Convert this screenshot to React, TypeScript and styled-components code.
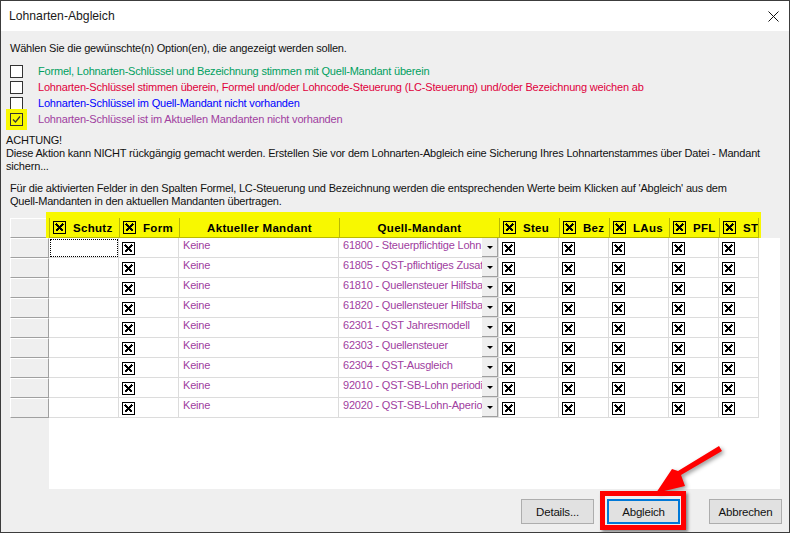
import React from "react";
import styled, { createGlobalStyle } from "styled-components";

const Global = createGlobalStyle`
  html, body { margin: 0; padding: 0; background: #efefef; }
  * { box-sizing: border-box; }
`;

const Dialog = styled.div`
  position: relative;
  width: 790px;
  height: 533px;
  display: flex;
  flex-direction: column;
  background: #efefef;
  border: 1px solid #3c3c3c;
  font-family: "Liberation Sans", Arial, sans-serif;
  font-size: 11px;
  letter-spacing: -0.19px;
  color: #111;
  overflow: hidden;
`;
const TitleBar = styled.div`
  height: 30px;
  flex: none;
  background: #fff;
  display: flex;
  align-items: center;
  justify-content: space-between;
  padding: 0 10px 0 8px;
  font-size: 12.2px;
  letter-spacing: 0;
  color: #1a1a1a;
`;
const CloseIcon = styled.svg`
  width: 11px;
  height: 11px;
  stroke: #111;
  stroke-width: 1;
  fill: none;
`;
const Body = styled.div`
  flex: 1;
  display: flex;
  flex-direction: column;
  min-height: 0;
`;
const Prompt = styled.div`
  height: 14px;
  line-height: 14px;
  margin: 10px 0 0 9px;
`;
const Options = styled.div`
  margin: 8px 0 0 9px;
  display: flex;
  flex-direction: column;
`;
const OptionRow = styled.div`
  height: 16px;
  display: flex;
  align-items: center;
  gap: 15px;
`;
const OptionBox = styled.span<{ $marked?: boolean }>`
  position: relative;
  width: 13px;
  height: 13px;
  flex: none;
  background: ${(p) => (p.$marked ? "#f8f800" : "#fff")};
  border: 1px solid #333;
  box-shadow: ${(p) => (p.$marked ? "0 0 0 4px #f8f800" : "none")};
  svg { position: absolute; left: 1px; top: 1px; }
`;
const OptionLabel = styled.span<{ $color: string }>`
  color: ${(p) => p.$color};
  line-height: 14px;
`;
const Warning = styled.div`
  margin: 7px 0 0 5px;
  line-height: 13px;
  width: 770px;
`;
const Hint = styled.div`
  margin: 9px 0 0 9px;
  line-height: 13px;
  width: 735px;
`;
const GridArea = styled.div`
  margin: 10px 0 0 9px;
  display: flex;
  flex-direction: column;
  width: 770px;
  height: 271px;
`;
const HeadRow = styled.div`
  display: flex;
  height: 20px;
  flex: none;
`;
const Corner = styled.div`
  width: 39px;
  flex: none;
  background: #efefef;
  border-top: 1px solid #fff;
  border-left: 1px solid #fff;
  border-bottom: 1px solid #a0a0a0;
`;
const Band = styled.div`
  display: flex;
  background: #f8f800;
  height: 26px;
  margin: -6px 0 0 -3px;
  padding: 6px 2px 0 3px;
  flex: none;
  position: relative;
`;
const HeadCell = styled.div<{ $w: number; $center?: boolean }>`
  width: ${(p) => p.$w}px;
  flex: none;
  display: flex;
  align-items: center;
  justify-content: ${(p) => (p.$center ? "center" : "flex-start")};
  gap: 7px;
  padding-left: ${(p) => (p.$center ? 0 : 3)}px;
  font-weight: 700;
  font-size: 11.5px;
  letter-spacing: 0.3px;
  color: #000;
  border-left: 1px solid #b9b900;
  border-bottom: 1px solid #b9b900;
  white-space: nowrap;
  overflow: hidden;
  &:last-child { border-right: 1px solid #b9b900; }
`;
const GridBody = styled.div`
  flex: 1;
  display: flex;
  min-height: 0;
`;
const RowHeads = styled.div`
  width: 39px;
  flex: none;
  display: flex;
  flex-direction: column;
`;
const RowHead = styled.div`
  height: 20px;
  background: #efefef;
  border-top: 1px solid #fff;
  border-left: 1px solid #fff;
  border-bottom: 1px solid #a0a0a0;
  border-right: 1px solid #a0a0a0;
`;
const Sheet = styled.div`
  flex: 1;
  background: #fff;
  display: flex;
  flex-direction: column;
`;
const Row = styled.div`
  display: flex;
  height: 20px;
  flex: none;
`;
const Cell = styled.div<{ $w: number; $focus?: boolean }>`
  position: relative;
  width: ${(p) => p.$w}px;
  height: 20px;
  flex: none;
  display: flex;
  padding-left: 3px;
  border-right: 1px solid #dcdcdc;
  border-bottom: 1px solid #dcdcdc;
  ${(p) => (p.$focus ? "outline: 1px dotted #000; outline-offset: -2px;" : "")}
`;
const Mark = styled.span<{ $head?: boolean }>`
  width: 13px;
  height: 13px;
  flex: none;
  margin-top: ${(p) => (p.$head ? 0 : 4)}px;
  border: 1px solid #000;
  background: ${(p) => (p.$head ? "transparent" : "#fff")};
  display: flex;
  align-items: center;
  justify-content: center;
`;
const Purple = styled.span`
  color: #a040a0;
  line-height: 14px;
  white-space: nowrap;
  overflow: hidden;
  width: 139px;
  flex: none;
  margin-left: 1px;
`;
const DropButton = styled.span`
  position: absolute;
  right: 0;
  top: 0;
  width: 16px;
  height: 19px;
  background: #efefef;
  border-right: 1px solid #a0a0a0;
  border-bottom: 1px solid #a0a0a0;
  display: flex;
  align-items: center;
  justify-content: center;
  &::after {
    content: "";
    border-left: 3px solid transparent;
    border-right: 3px solid transparent;
    border-top: 3px solid #000;
  }
`;
const Footer = styled.div`
  position: relative;
  flex: none;
  display: flex;
  justify-content: flex-end;
  padding: 10px 7px 0 0;
  height: 42px;
`;
const Button = styled.div<{ $primary?: boolean; $gap?: number }>`
  width: 73px;
  height: 25px;
  margin-right: ${(p) => p.$gap ?? 0}px;
  display: flex;
  align-items: center;
  justify-content: center;
  background: #e1e1e1;
  border: ${(p) => (p.$primary ? "2px solid #0078d7" : "1px solid #adadad")};
  color: #111;
  font-size: 11.5px;
`;
const RedFrame = styled.div`
  position: absolute;
  left: 599px;
  top: 490px;
  width: 86px;
  height: 39px;
  border: 5px solid #ff0000;
  box-shadow: 2px 2px 3px rgba(0, 0, 0, 0.45);
  pointer-events: none;
`;
const ArrowSvg = styled.svg`
  position: absolute;
  left: 640px;
  top: 436px;
  width: 90px;
  height: 62px;
  filter: drop-shadow(2px 2px 2px rgba(0, 0, 0, 0.4));
  pointer-events: none;
`;

const XMark = () => (
  <svg width="11" height="11" viewBox="0 0 11 11" shapeRendering="crispEdges">
    <path d="M2 2L9 9M9 2L2 9" stroke="#000" strokeWidth="2.2" fill="none" />
  </svg>
);

const columns = [
  { w: 70, label: "Schutz", box: true },
  { w: 60, label: "Form", box: true },
  { w: 160, label: "Aktueller Mandant", box: false },
  { w: 160, label: "Quell-Mandant", box: false },
  { w: 60, label: "Steu", box: true },
  { w: 50, label: "Bez", box: true },
  { w: 60, label: "LAus", box: true },
  { w: 50, label: "PFL", box: true },
  { w: 40, label: "ST", box: true },
];

const rows = [
  "61800 - Steuerpflichtige Lohn",
  "61805 - QST-pflichtiges Zusatz",
  "61810 - Quellensteuer Hilfsbasis",
  "61820 - Quellensteuer Hilfsbasis",
  "62301 - QST Jahresmodell",
  "62303 - Quellensteuer",
  "62304 - QST-Ausgleich",
  "92010 - QST-SB-Lohn periodisch",
  "92020 - QST-SB-Lohn-Aperiodisch",
];

const options = [
  { color: "#00a060", text: "Formel, Lohnarten-Schlüssel und Bezeichnung stimmen mit Quell-Mandant überein" },
  { color: "#e0003c", text: "Lohnarten-Schlüssel stimmen überein, Formel und/oder Lohncode-Steuerung (LC-Steuerung) und/oder Bezeichnung weichen ab" },
  { color: "#0000ff", text: "Lohnarten-Schlüssel im Quell-Mandant nicht vorhanden" },
  { color: "#a040a0", text: "Lohnarten-Schlüssel ist im Aktuellen Mandanten nicht vorhanden", marked: true },
];

export default function App() {
  return (
    <Dialog>
      <Global />
      <TitleBar>
        <span>Lohnarten-Abgleich</span>
        <CloseIcon viewBox="0 0 11 11">
          <path d="M0.5 0.5L10.5 10.5M10.5 0.5L0.5 10.5" />
        </CloseIcon>
      </TitleBar>
      <Body>
        <Prompt>Wählen Sie die gewünschte(n) Option(en), die angezeigt werden sollen.</Prompt>
        <Options>
          {options.map((o) => (
            <OptionRow key={o.text}>
              <OptionBox $marked={o.marked}>
                {o.marked && (
                  <svg width="9" height="9" viewBox="0 0 9 9" fill="none" stroke="#333" strokeWidth="1.2">
                    <path d="M1 4.5L3.5 7L8 1.5" />
                  </svg>
                )}
              </OptionBox>
              <OptionLabel $color={o.color}>{o.text}</OptionLabel>
            </OptionRow>
          ))}
        </Options>
        <Warning>
          ACHTUNG!
          <br />
          Diese Aktion kann NICHT rückgängig gemacht werden. Erstellen Sie vor dem Lohnarten-Abgleich eine Sicherung Ihres Lohnartenstammes über Datei - Mandant sichern...
        </Warning>
        <Hint>
          Für die aktivierten Felder in den Spalten Formel, LC-Steuerung und Bezeichnung werden die entsprechenden Werte beim Klicken auf 'Abgleich' aus dem Quell-Mandanten in den aktuellen Mandanten übertragen.
        </Hint>
        <GridArea>
          <HeadRow>
            <Corner />
            <Band>
              {columns.map((c) => (
                <HeadCell key={c.label} $w={c.w} $center={!c.box}>
                  {c.box && (
                    <Mark $head>
                      <XMark />
                    </Mark>
                  )}
                  {c.label}
                </HeadCell>
              ))}
            </Band>
          </HeadRow>
          <GridBody>
            <RowHeads>
              {rows.map((r) => (
                <RowHead key={r} />
              ))}
            </RowHeads>
            <Sheet>
              {rows.map((r, i) => (
                <Row key={r}>
                  <Cell $w={70} $focus={i === 0} />
                  <Cell $w={60}>
                    <Mark><XMark /></Mark>
                  </Cell>
                  <Cell $w={160}>
                    <Purple>Keine</Purple>
                  </Cell>
                  <Cell $w={160}>
                    <Purple>{r}</Purple>
                    <DropButton />
                  </Cell>
                  {[60, 50, 60, 50, 40].map((w, k) => (
                    <Cell key={k} $w={w}>
                      <Mark><XMark /></Mark>
                    </Cell>
                  ))}
                </Row>
              ))}
            </Sheet>
          </GridBody>
        </GridArea>
        <Footer>
          <Button $gap={13}>Details...</Button>
          <Button $primary $gap={29}>Abgleich</Button>
          <Button>Abbrechen</Button>
        </Footer>
      </Body>
      <ArrowSvg viewBox="0 0 90 62">
        <polygon points="78,9 81,14 40,38 44,49 15,56 31,32 37,34" fill="#ff0000" />
      </ArrowSvg>
      <RedFrame />
    </Dialog>
  );
}
